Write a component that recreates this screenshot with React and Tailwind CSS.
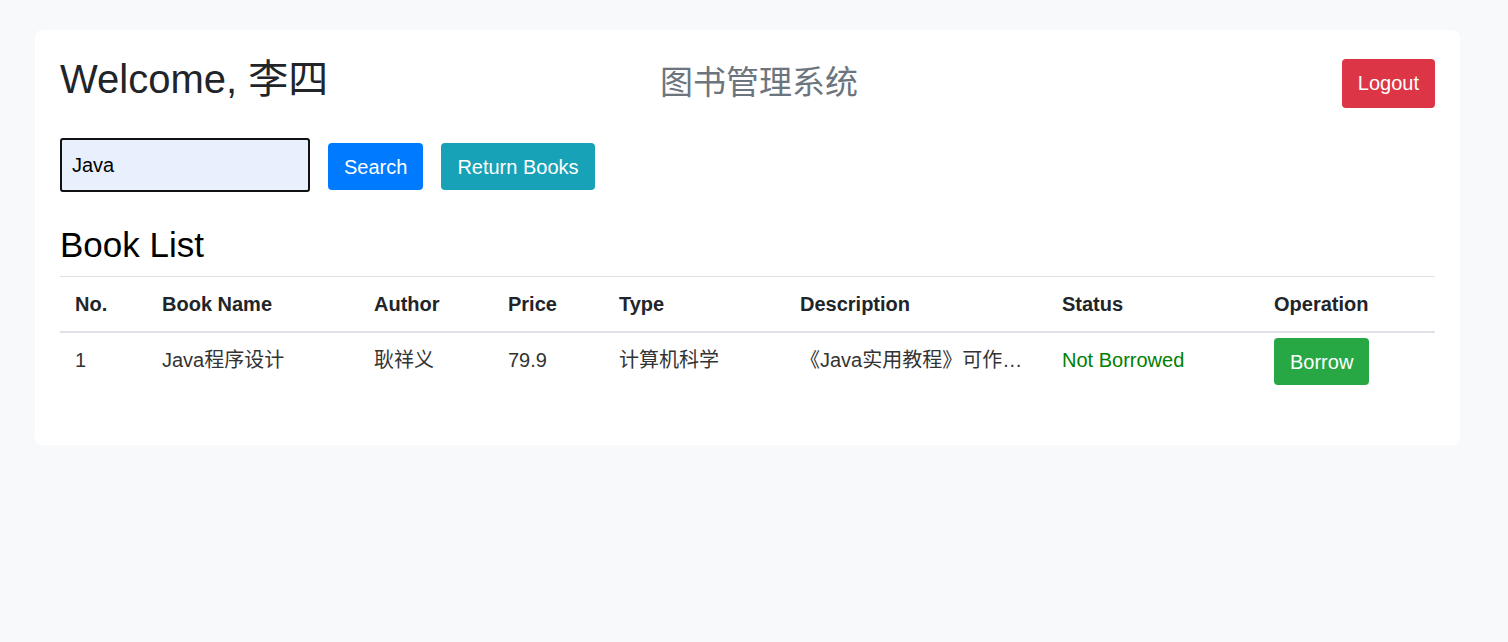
import React from "react";

const font = { fontFamily: '"Liberation Sans", Arial, "Noto Sans CJK SC", sans-serif' };

export default function App() {
  const cols = [
    { key: "no", label: "No.", w: "w-[87px]" },
    { key: "name", label: "Book Name", w: "w-[212px]" },
    { key: "author", label: "Author", w: "w-[134px]" },
    { key: "price", label: "Price", w: "w-[111px]" },
    { key: "type", label: "Type", w: "w-[181px]" },
    { key: "desc", label: "Description", w: "w-[262px]" },
    { key: "status", label: "Status", w: "w-[212px]" },
    { key: "op", label: "Operation", w: "w-[176px]" },
  ];
  return (
    <div className="min-h-[642px] bg-[#f8f9fa] pt-[30px] pl-[35px] pr-[48px]" style={font}>
      <div className="w-[1425px] rounded-[7px] bg-white p-[25px] pb-[24px]">
        {/* Header */}
        <div className="flex items-center">
          <div className="w-[600px] shrink-0">
            <h1 className="mb-2 text-[40px] leading-[48px] text-[#212529]">Welcome, 李四</h1>
          </div>
          <div className="flex-1 pt-[7px]">
            <h2 className="mb-2 text-[33px] leading-[38px] text-[#6c757d]">图书管理系统</h2>
          </div>
          <button className="h-[49px] rounded-[4px] bg-[#dc3545] px-4 text-[20px] text-white">
            Logout
          </button>
        </div>

        {/* Search row */}
        <div className="mt-[27px] flex items-center gap-[18px]">
          <input
            defaultValue="Java"
            className="h-[54px] w-[250px] rounded-[3px] border-2 border-[#111] bg-[#e8f0fe] px-[10px] text-[20px] text-black outline-none"
          />
          <button className="mt-[3px] h-[47px] rounded-[4px] bg-[#007bff] px-4 text-[20px] text-white">
            Search
          </button>
          <button className="mt-[3px] h-[47px] rounded-[4px] bg-[#17a2b8] px-4 text-[20px] text-white">
            Return Books
          </button>
        </div>

        {/* Book list */}
        <h2 className="mt-[32px] mb-[10px] text-[35px] leading-[42px] text-black">Book List</h2>
        <table className="mb-[24px] w-full table-fixed border-collapse text-[20px] leading-[30px] text-[#333]">
          <colgroup>
            {cols.map((c) => (
              <col key={c.key} className={c.w} />
            ))}
          </colgroup>
          <thead>
            <tr className="border-t border-[#dee2e6]">
              {cols.map((c) => (
                <th
                  key={c.key}
                  className="border-b-2 border-[#dee2e6] px-[15px] py-3 text-left align-bottom font-bold text-[#212529]"
                >
                  {c.label}
                </th>
              ))}
            </tr>
          </thead>
          <tbody>
            <tr>
              <td className="px-[15px] py-3 align-top">1</td>
              <td className="px-[15px] py-3 align-top">Java程序设计</td>
              <td className="px-[15px] py-3 align-top">耿祥义</td>
              <td className="px-[15px] py-3 align-top">79.9</td>
              <td className="px-[15px] py-3 align-top">计算机科学</td>
              <td className="px-[15px] py-3 align-top">
                <div className="w-full overflow-hidden text-ellipsis whitespace-nowrap">
                  《Java实用教程》可作为高等院校计算机专业教材
                </div>
              </td>
              <td className="px-[15px] py-3 align-top text-[#008000]">Not Borrowed</td>
              <td className="px-[15px] pt-[5px] pb-3 align-top">
                <button className="h-[47px] rounded-[4px] bg-[#28a745] px-4 text-[20px] text-white">
                  Borrow
                </button>
              </td>
            </tr>
          </tbody>
        </table>
      </div>
    </div>
  );
}
